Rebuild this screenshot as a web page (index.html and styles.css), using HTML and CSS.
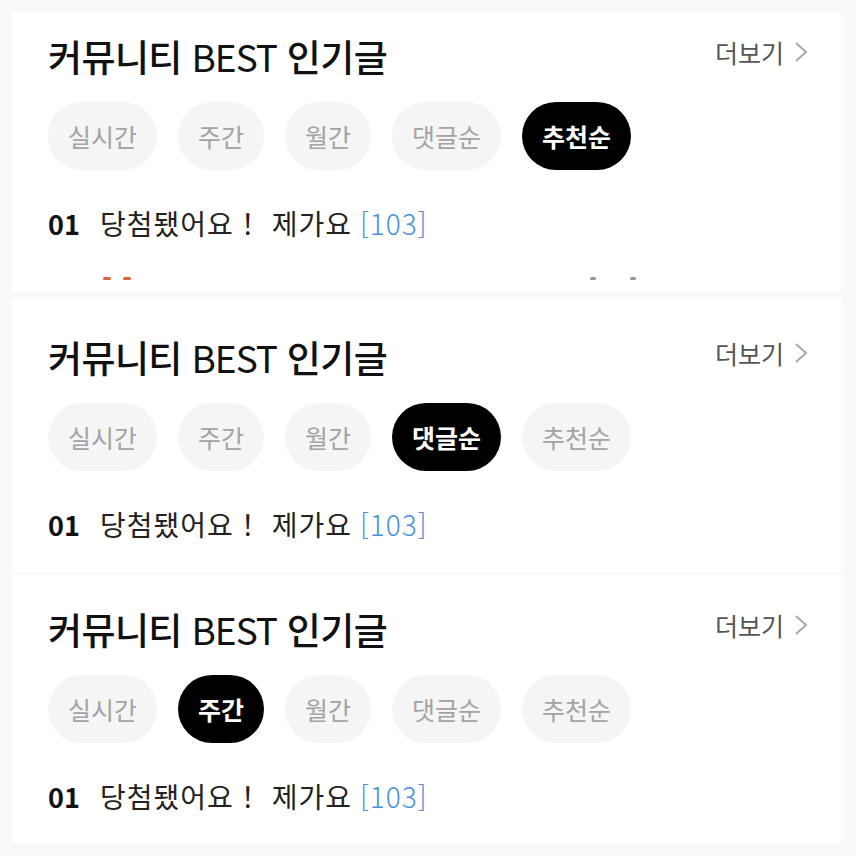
FILE: index.html
```html
<!DOCTYPE html>
<html lang="ko">
  <head>
    <meta charset="UTF-8" />
    <meta name="viewport" content="width=device-width, initial-scale=1.0" />
    <title>커뮤니티 BEST 인기글</title>
    <link rel="stylesheet" href="styles.css">
  </head>
  <body>
    <section class="card card-first">
      <div class="card-head">
        <h2 class="card-title">커뮤니티 <span class="latin">BEST</span> 인기글</h2>
        <a class="more-link" href="#">더보기
          <svg class="chevron" width="14" height="22" viewBox="0 0 14 22"><polyline points="2,2 12,11 2,20" fill="none" stroke="#a8a8a8" stroke-width="2" /></svg>
        </a>
      </div>
      <ul class="tabs">
        <li class="tab">실시간</li>
        <li class="tab">주간</li>
        <li class="tab">월간</li>
        <li class="tab">댓글순</li>
        <li class="tab active">추천순</li>
      </ul>
      <ol class="posts">
        <li class="post"><span class="rank">01</span><span class="post-title">당첨됐어요！ 제가요</span><span class="count">[103]</span></li>
        <li class="post post-cut"><span class="mark mark-red"></span><span class="mark mark-red"></span><span class="cut-gap"></span><span class="mark mark-gray"></span><span class="mark mark-gray"></span></li>
      </ol>
    </section>

    <section class="card card-second">
      <div class="card-head">
        <h2 class="card-title">커뮤니티 <span class="latin">BEST</span> 인기글</h2>
        <a class="more-link" href="#">더보기
          <svg class="chevron" width="14" height="22" viewBox="0 0 14 22"><polyline points="2,2 12,11 2,20" fill="none" stroke="#a8a8a8" stroke-width="2" /></svg>
        </a>
      </div>
      <ul class="tabs">
        <li class="tab">실시간</li>
        <li class="tab">주간</li>
        <li class="tab">월간</li>
        <li class="tab active">댓글순</li>
        <li class="tab">추천순</li>
      </ul>
      <ol class="posts">
        <li class="post"><span class="rank">01</span><span class="post-title">당첨됐어요！ 제가요</span><span class="count">[103]</span></li>
      </ol>
    </section>

    <section class="card card-third">
      <div class="card-head">
        <h2 class="card-title">커뮤니티 <span class="latin">BEST</span> 인기글</h2>
        <a class="more-link" href="#">더보기
          <svg class="chevron" width="14" height="22" viewBox="0 0 14 22"><polyline points="2,2 12,11 2,20" fill="none" stroke="#a8a8a8" stroke-width="2" /></svg>
        </a>
      </div>
      <ul class="tabs">
        <li class="tab">실시간</li>
        <li class="tab active">주간</li>
        <li class="tab">월간</li>
        <li class="tab">댓글순</li>
        <li class="tab">추천순</li>
      </ul>
      <ol class="posts">
        <li class="post"><span class="rank">01</span><span class="post-title">당첨됐어요！ 제가요</span><span class="count">[103]</span></li>
      </ol>
    </section>
  </body>
</html>
```

FILE: styles.css
```css
body {
  margin: 0;
  padding: 12px 14px 0 12px;
  background-color: #f9f9f9;
  font-family: "Noto Sans CJK KR", "Noto Sans", sans-serif;
  color: #111;
}

.card {
  background-color: #fff;
  padding: 22px 34px 0 36px;
  overflow: hidden;
  box-sizing: border-box;
}
.card-first {
  height: 280px;
}
.card-second {
  margin-top: 5px;
  height: 275px;
  padding-top: 38px;
}
.card-third {
  margin-top: 3px;
  height: 268px;
  padding-top: 32px;
}

.card-head {
  display: flex;
  justify-content: space-between;
  align-items: flex-start;
}
.card-title {
  margin: 0;
  font-size: 37px;
  line-height: 44px;
  font-weight: 500;
  letter-spacing: -0.6px;
}
.card-title .latin {
  font-weight: 400;
  letter-spacing: -1px;
}
.more-link {
  display: flex;
  align-items: center;
  gap: 10px;
  font-size: 25px;
  line-height: 36px;
  color: #555;
  text-decoration: none;
}

.tabs {
  display: flex;
  gap: 21px;
  margin: 24px 0 0 0;
  padding: 0;
  list-style: none;
}
.tab {
  height: 68px;
  padding: 0 20px;
  border-radius: 34px;
  background-color: #f5f5f5;
  color: #a3a3a3;
  font-size: 25px;
  line-height: 68px;
}
.tab.active {
  background-color: #000;
  color: #fff;
  font-weight: 700;
}

.posts {
  margin: 33px 0 0 0;
  padding: 0;
  list-style: none;
}
.post {
  display: flex;
  align-items: center;
  height: 40px;
  font-size: 28px;
  letter-spacing: 1px;
  color: #222;
}
.rank {
  width: 52px;
  font-weight: 700;
  font-size: 27px;
  letter-spacing: 0;
  color: #111;
}
.post-title {
  margin-right: 8px;
}
.count {
  color: #4a8fe0;
  font-weight: 300;
}

.post-cut {
  margin-top: 34px;
  padding-left: 55px;
  align-items: flex-start;
  gap: 12px;
}
.mark {
  width: 8px;
  height: 3px;
  border-radius: 2px;
}
.mark-red {
  background-color: #d9643d;
}
.mark-gray {
  background-color: #8a9aa6;
  width: 6px;
  margin-right: 22px;
}
.cut-gap {
  width: 435px;
}
```
